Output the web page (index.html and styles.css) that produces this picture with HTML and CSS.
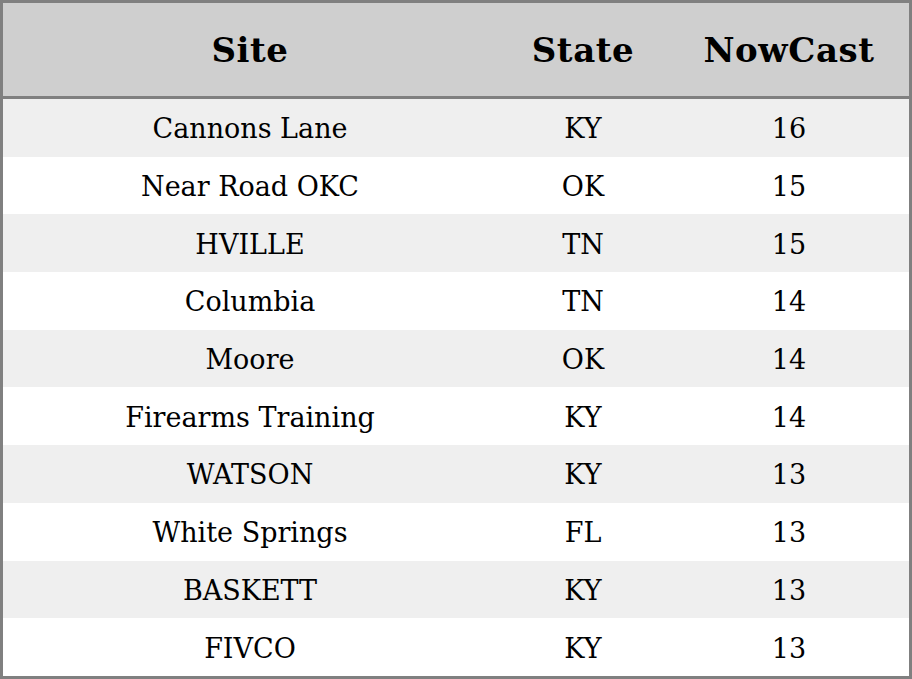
FILE: index.html
```html
<!DOCTYPE html>
<html>
<head>
<meta charset="utf-8">
<link rel="stylesheet" href="styles.css">
</head>
<body>
<table class="aq">
  <colgroup>
    <col class="c-site">
    <col class="c-state">
    <col class="c-now">
  </colgroup>
  <thead>
    <tr class="head"><th>Site</th><th>State</th><th>NowCast</th></tr>
  </thead>
  <tbody>
    <tr><td>Cannons Lane</td><td>KY</td><td>16</td></tr>
    <tr><td>Near Road OKC</td><td>OK</td><td>15</td></tr>
    <tr><td>HVILLE</td><td>TN</td><td>15</td></tr>
    <tr><td>Columbia</td><td>TN</td><td>14</td></tr>
    <tr><td>Moore</td><td>OK</td><td>14</td></tr>
    <tr><td>Firearms Training</td><td>KY</td><td>14</td></tr>
    <tr><td>WATSON</td><td>KY</td><td>13</td></tr>
    <tr><td>White Springs</td><td>FL</td><td>13</td></tr>
    <tr><td>BASKETT</td><td>KY</td><td>13</td></tr>
    <tr><td>FIVCO</td><td>KY</td><td>13</td></tr>
  </tbody>
</table>
</body>
</html>
```
FILE: styles.css
```css
html, body {
  margin: 0;
  padding: 0;
  background: #ffffff;
}
.aq {
  width: 912px;
  height: 679px;
  box-sizing: border-box;
  border: 3px solid #808080;
  border-collapse: separate;
  border-spacing: 0;
  font-family: "DejaVu Serif", serif;
  color: #000000;
  table-layout: fixed;
}
.c-site { width: 494px; }
.c-state { width: 172px; }
.c-now { width: 240px; }
.head th {
  height: 93px;
  background: #cfcfcf;
  border-bottom: 3px solid #808080;
  font-size: 34px;
  font-weight: bold;
  letter-spacing: 0.6px;
  text-align: center;
  padding: 0;
}
.aq td {
  height: 55.7px;
  padding: 2px 0 0 0;
  text-align: center;
  font-size: 27px;
}
.aq tbody tr:nth-child(odd) td {
  background: #efefef;
}
```
